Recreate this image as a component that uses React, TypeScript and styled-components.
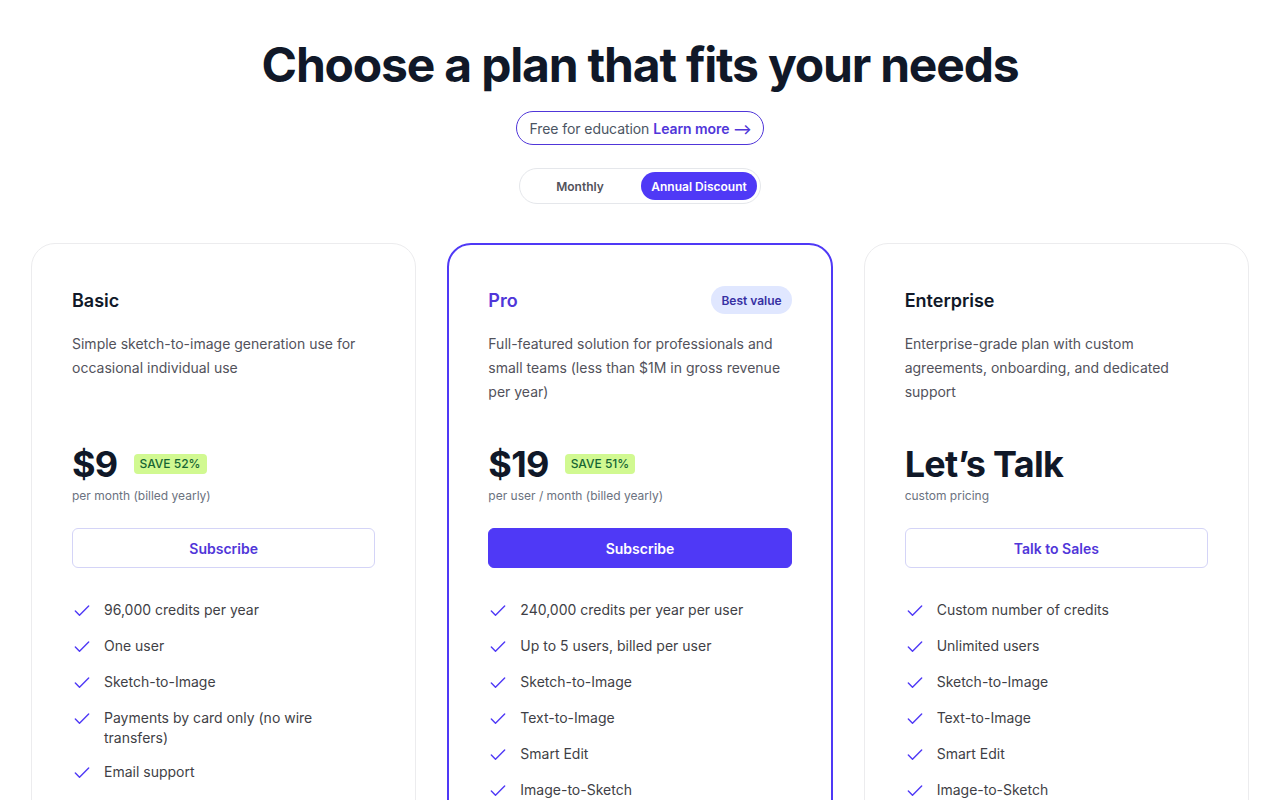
import { createGlobalStyle } from 'styled-components'
import styled from 'styled-components'

const GlobalStyle = createGlobalStyle`
  * { box-sizing: border-box; }
  body {
    margin: 0;
    background: #ffffff;
    font-family: Inter, "Noto Sans", sans-serif;
    color: #111827;
  }
`

const colors = {
  primary: '#4f39f6',
  primaryText: '#5036d9',
  heading: '#101828',
  body: '#52525b',
  muted: '#6b7280',
  border: '#ececee',
}

type Plan = {
  name: string
  highlight?: boolean
  badge?: string
  description: string
  price: string
  save?: string
  sub: string
  cta: string
  features: string[]
}

const plans: Plan[] = [
  {
    name: 'Basic',
    description: 'Simple sketch-to-image generation use for occasional individual use',
    price: '$9',
    save: 'SAVE 52%',
    sub: 'per month (billed yearly)',
    cta: 'Subscribe',
    features: [
      '96,000 credits per year',
      'One user',
      'Sketch-to-Image',
      'Payments by card only (no wire transfers)',
      'Email support',
    ],
  },
  {
    name: 'Pro',
    highlight: true,
    badge: 'Best value',
    description:
      'Full-featured solution for professionals and small teams (less than $1M in gross revenue per year)',
    price: '$19',
    save: 'SAVE 51%',
    sub: 'per user / month (billed yearly)',
    cta: 'Subscribe',
    features: [
      '240,000 credits per year per user',
      'Up to 5 users, billed per user',
      'Sketch-to-Image',
      'Text-to-Image',
      'Smart Edit',
      'Image-to-Sketch',
    ],
  },
  {
    name: 'Enterprise',
    description: 'Enterprise-grade plan with custom agreements, onboarding, and dedicated support',
    price: 'Let\u2019s Talk',
    sub: 'custom pricing',
    cta: 'Talk to Sales',
    features: [
      'Custom number of credits',
      'Unlimited users',
      'Sketch-to-Image',
      'Text-to-Image',
      'Smart Edit',
      'Image-to-Sketch',
    ],
  },
]

const CheckIcon = () => (
  <svg width='20' height='20' viewBox='0 0 24 24' fill='none' stroke={colors.primary} strokeWidth='1.7' strokeLinecap='round' strokeLinejoin='round'>
    <path d='M20 6 9 17l-5-5' />
  </svg>
)

const App = () => {
  return (
    <>
      <GlobalStyle />
      <Page>
        <Title>Choose a plan that fits your needs</Title>
        <EduPill>
          Free for education <EduLink>Learn more &#x27F6;</EduLink>
        </EduPill>
        <Toggle>
          <ToggleOption>Monthly</ToggleOption>
          <ToggleOption active>Annual Discount</ToggleOption>
        </Toggle>
        <Cards>
          {plans.map((plan) => (
            <Card key={plan.name} highlight={plan.highlight}>
              <CardHeader>
                <PlanName highlight={plan.highlight}>{plan.name}</PlanName>
                {plan.badge && <Badge>{plan.badge}</Badge>}
              </CardHeader>
              <Description>{plan.description}</Description>
              <PriceRow>
                <Price>{plan.price}</Price>
                {plan.save && <Save>{plan.save}</Save>}
              </PriceRow>
              <PriceSub>{plan.sub}</PriceSub>
              <CtaButton primary={plan.highlight}>{plan.cta}</CtaButton>
              <Features>
                {plan.features.map((feature) => (
                  <Feature key={feature}>
                    <CheckWrap>
                      <CheckIcon />
                    </CheckWrap>
                    <FeatureText>{feature}</FeatureText>
                  </Feature>
                ))}
              </Features>
            </Card>
          ))}
        </Cards>
      </Page>
    </>
  )
}

const Page = styled.main`
  display: flex;
  flex-direction: column;
  align-items: center;
  padding: 36px 31px 0;
`

const Title = styled.h1`
  margin: 0;
  font-size: 48px;
  line-height: 58px;
  font-weight: 700;
  letter-spacing: -0.025em;
  color: ${colors.heading};
`

const EduPill = styled.div`
  margin-top: 17px;
  height: 34px;
  padding: 0 11px 0 12px;
  display: flex;
  align-items: center;
  gap: 4px;
  border: 1px solid ${colors.primaryText};
  border-radius: 999px;
  font-size: 14px;
  letter-spacing: -0.005em;
  color: #4b5563;
`

const EduLink = styled.span`
  color: ${colors.primaryText};
  font-weight: 600;
`

const Toggle = styled.div`
  margin-top: 23px;
  width: 242px;
  height: 36px;
  padding: 3px;
  display: grid;
  grid-template-columns: 1fr 116px;
  border: 1px solid #e5e7eb;
  border-radius: 999px;
`

const ToggleOption = styled.div<{ active?: boolean }>`
  display: flex;
  align-items: center;
  justify-content: center;
  padding-right: ${(p) => (p.active ? '0' : '4px')};
  border-radius: 999px;
  font-size: 12px;
  font-weight: 600;
  color: ${(p) => (p.active ? '#ffffff' : '#52525b')};
  background: ${(p) => (p.active ? colors.primary : 'transparent')};
`

const Cards = styled.div`
  margin-top: 39px;
  width: 100%;
  display: grid;
  grid-template-columns: repeat(3, 1fr);
  gap: 31px;
`

const Card = styled.section<{ highlight?: boolean }>`
  padding: ${(p) => (p.highlight ? '39px 39px 80px' : '40px 40px 80px')};
  border: ${(p) => (p.highlight ? `2px solid ${colors.primary}` : `1px solid ${colors.border}`)};
  border-radius: 24px;
  display: flex;
  flex-direction: column;
`

const CardHeader = styled.div`
  height: 32px;
  display: flex;
  align-items: center;
  justify-content: space-between;
`

const PlanName = styled.h2<{ highlight?: boolean }>`
  margin: 0;
  font-size: 18px;
  font-weight: 600;
  color: ${(p) => (p.highlight ? colors.primaryText : colors.heading)};
`

const Badge = styled.span`
  padding: 0 10px;
  height: 28px;
  display: flex;
  align-items: center;
  border-radius: 999px;
  background: #e0e7ff;
  color: #3730a3;
  font-size: 12px;
  font-weight: 600;
`

const Description = styled.p`
  margin: 16px 0 0;
  min-height: 72px;
  font-size: 14px;
  line-height: 24px;
  color: ${colors.body};
`

const PriceRow = styled.div`
  margin-top: 40px;
  height: 40px;
  display: flex;
  align-items: center;
  gap: 16px;
`

const Price = styled.span`
  font-size: 36px;
  font-weight: 700;
  letter-spacing: -0.02em;
  color: ${colors.heading};
`

const Save = styled.span`
  padding: 2px 6px;
  border-radius: 4px;
  background: #d1f991;
  color: #166534;
  font-size: 12px;
  font-weight: 500;
  line-height: 16px;
`

const PriceSub = styled.div`
  margin-top: 4px;
  font-size: 12px;
  line-height: 16px;
  color: ${colors.muted};
`

const CtaButton = styled.button<{ primary?: boolean }>`
  margin-top: 24px;
  height: 40px;
  width: 100%;
  border-radius: 6px;
  font-family: inherit;
  font-size: 14px;
  font-weight: 600;
  cursor: pointer;
  border: 1px solid ${(p) => (p.primary ? colors.primary : '#d4d4f7')};
  background: ${(p) => (p.primary ? colors.primary : '#ffffff')};
  color: ${(p) => (p.primary ? '#ffffff' : colors.primaryText)};
`

const Features = styled.ul`
  margin: 30px 0 0;
  padding: 0;
  list-style: none;
  display: flex;
  flex-direction: column;
  gap: 12px;
`

const Feature = styled.li`
  display: flex;
  align-items: flex-start;
  gap: 12px;
`

const CheckWrap = styled.span`
  width: 20px;
  height: 24px;
  display: flex;
  align-items: center;
  justify-content: center;
  padding-top: 2px;
  flex-shrink: 0;
`

const FeatureText = styled.span`
  padding-top: 2px;
  font-size: 14px;
  line-height: 20px;
  color: #3f3f46;
`

export default App
